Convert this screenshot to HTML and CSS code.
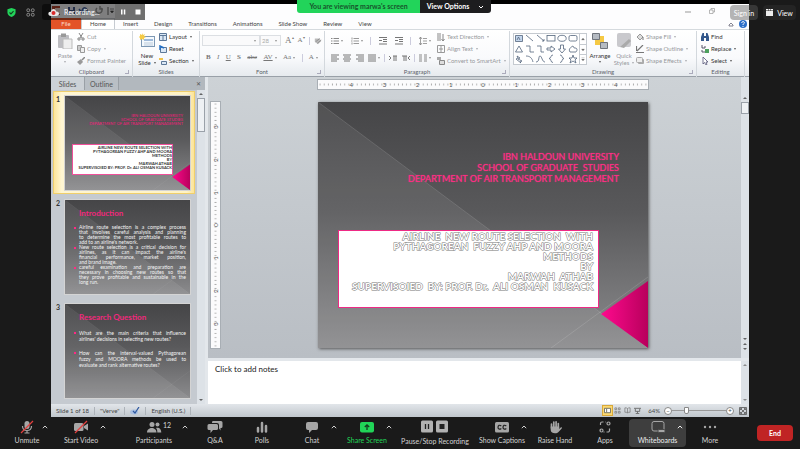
FILE: index.html
```html
<!DOCTYPE html>
<html lang="en">
<head>
<meta charset="utf-8">
<title>Meeting – shared screen</title>
<link rel="stylesheet" href="styles.css">
</head>
<body>
<svg class="defs" aria-hidden="true">
  <defs>
    <linearGradient id="slide-bg" x1="0" y1="0" x2="0" y2="1"><stop offset="0" stop-color="#454547"/><stop offset=".45" stop-color="#59595b"/><stop offset="1" stop-color="#8b8b8d"/></linearGradient>
    <linearGradient id="slide-pink" x1="0" y1="0" x2="1" y2="0"><stop offset="0" stop-color="#ff0a8e"/><stop offset="1" stop-color="#b8005c"/></linearGradient>
    <symbol id="backdrop" viewBox="0 0 330 246" preserveAspectRatio="none">
      <rect width="330" height="246" fill="url(#slide-bg)"/>
      <path d="M0 0 330 246H0z" fill="#fff" fill-opacity=".07"/>
      <path d="M0 0 330 246M233 246 330 175" stroke="#fff" stroke-opacity=".13" fill="none"/>
    </symbol>
    <symbol id="corner" viewBox="0 0 330 246" preserveAspectRatio="none"><path d="M330 179V246L283 212z" fill="url(#slide-pink)"/></symbol>
    <symbol id="caret" viewBox="0 0 6 4"><path d="M.8 3.2 3 1l2.200 2.200" fill="none" stroke="currentColor"/></symbol>
    <pattern id="ticks" width="4.1" height="9" patternUnits="userSpaceOnUse"><path d="M2 3.500V5.500" stroke="#999" stroke-width=".8"/></pattern>
    <pattern id="ticks-v" width="9" height="4.1" patternUnits="userSpaceOnUse"><path d="M3.500 2H5.500" stroke="#999" stroke-width=".8"/></pattern>
  </defs>
</svg>

<main class="stage">
  <div class="gutter gutter-left">
    <svg class="shield" viewBox="0 0 10 10"><path d="M5 0 9.500 1.500V5C9.500 7.500 7.500 9.200 5 10 2.500 9.200.5 7.500.5 5V1.500z" fill="#22d45a"/><path d="M2.800 5 4.400 6.600 7.300 3.500" fill="none" stroke="#143d20" stroke-width="1.200"/></svg>
    <svg class="apps-grid" viewBox="0 0 10 10" fill="none" stroke="#9a9a9a"><rect x="1" y="1" width="3" height="3" rx="1"/><rect x="6" y="1" width="3" height="3" rx="1"/><rect x="1" y="6" width="3" height="3" rx="1"/><rect x="6" y="6" width="3" height="3" rx="1"/></svg>
  </div>

  <section class="app" aria-label="Shared presentation window">
    <header class="titlebar">
      <svg class="quick" viewBox="0 0 66 12"><rect x="1" y="1" width="8" height="9" fill="#b7452c"/><rect x="4" y="3" width="5" height="6" fill="#f3d9cf"/><path d="M17 2h7v7h-7z" fill="#445a8c"/><path d="M19 2h3v3h-3zM18 6h5v3h-5z" fill="#eef"/><path d="M31 6c1-5 6-4 5 2M28 4l3 4 3-3" fill="none" stroke="#4b66a4" stroke-width="1.500"/><path d="M46 3a3 3 0 1 0 4 0M49 1v3h3" fill="none" stroke="#999" stroke-width="1.500"/><path d="M57 2v8" stroke="#666"/><path d="M59 4h4M59.500 6h3L61 8z" fill="#444" stroke="#444" stroke-width=".6"/></svg>
      <div class="window-controls">
        <button aria-label="Minimize"><svg viewBox="0 0 6 6"><path d="M0 4h6" stroke="#999"/></svg></button>
        <button aria-label="Restore"><svg viewBox="0 0 6 6" fill="none" stroke="#999" stroke-width=".7"><path d="M.5 2h3.500v3.500H.5zM2 2V.5h3.500V4H4"/></svg></button>
      </div>
    </header>
    <nav class="tabs">
      <button class="tab file">File</button>
      <button class="tab home">Home</button>
      <button class="tab">Insert</button>
      <button class="tab">Design</button>
      <button class="tab">Transitions</button>
      <button class="tab">Animations</button>
      <button class="tab">Slide Show</button>
      <button class="tab">Review</button>
      <button class="tab">View</button>
      <button class="help" aria-label="Collapse ribbon"><svg viewBox="0 0 8 8"><path d="M2 5 4 3l2 2v1H2z" fill="none" stroke="#667" stroke-width=".8"/></svg></button>
      <button class="help" aria-label="Help"><svg viewBox="0 0 8 8"><circle cx="4" cy="4" r="4" fill="#2c6fc9"/><path d="M2.700 3c0-2 3-1.800 2.600 0C5.200 3.800 4 3.800 4 5M4 6v1" stroke="#fff" fill="none"/></svg></button>
    </nav>

    <div class="ribbon">
      <section class="group">
        <div class="group-body">
          <button class="big muted"><svg viewBox="0 0 16 16"><rect x="1" y="2" width="11" height="13" rx="1" fill="#bdbdc1"/><path d="M4 .5h5V4H4z" fill="#999"/><path d="M6 6h9v10H6z" fill="#eee" stroke="#bbb"/></svg><span>Paste</span><i class="down"></i></button>
          <div class="stack">
            <button class="small muted"><svg viewBox="0 0 8 8"><path d="m2 0 3 5M6 0 3 5" stroke="#888"/><path d="M1 5h2v2H1zM5 5h2v2H5z" fill="none" stroke="#888"/></svg>Cut</button>
            <button class="small muted"><svg viewBox="0 0 8 8"><path d="M.5.5h4v5h-4z" fill="#ccc" stroke="#999"/><path d="M3.500 2.500h4v5h-4z" fill="#eee" stroke="#999"/></svg>Copy<i class="down"></i></button>
            <button class="small muted"><svg viewBox="0 0 8 8"><path d="M0 5 4 2l2 3-3 3z" fill="#999"/><path d="m5 3 3-3" stroke="#888" stroke-width="1.500"/></svg>Format Painter</button>
          </div>
        </div>
        <h2>Clipboard<i class="launch"></i></h2>
      </section>

      <section class="group">
        <div class="group-body">
          <button class="big"><svg viewBox="0 0 16 16"><rect x="2.500" y="3.500" width="13" height="10" fill="#f4f9fd" stroke="#7d98b4"/><path d="M5 6h9v2H5z" fill="#9ebadb"/><path d="M5 10h9M5 12h9" stroke="#bbcbdc"/><path d="m3 0 1 2 2-1-1 2 2 1-2 1 0 2-2-1-2 1V5L0 4l1-1V1l2 1z" fill="#f5cb47"/></svg><span>New<br>Slide<i class="down"></i></span></button>
          <div class="stack">
            <button class="small"><svg viewBox="0 0 8 8"><path d="M.5.5h7v7h-7z" fill="#dce8f5" stroke="#5d7898"/><path d="M1 2.500h6M4 3v4" stroke="#5d7898"/></svg>Layout<i class="down"></i></button>
            <button class="small"><svg viewBox="0 0 8 8"><path d="M1.500 2.500h6v5h-6z" fill="#dce8f5" stroke="#5d7898"/><path d="M1 5V1l4 2" fill="none" stroke="#2470c5" stroke-width="1.500"/></svg>Reset</button>
            <button class="small"><svg viewBox="0 0 8 8"><path d="M0 1h4v2H0z" fill="#f1c349"/><path d="M2.500 4.500h5v3h-5z" fill="#dce8f5" stroke="#5d7898"/></svg>Section<i class="down"></i></button>
          </div>
        </div>
        <h2>Slides</h2>
      </section>

      <section class="group">
        <div class="group-body rows">
          <div class="row">
            <div class="combo"><select class="font-name" aria-label="Font"><option></option></select><i class="down"></i></div>
            <div class="combo size"><select aria-label="Font size"><option>28</option></select><i class="down"></i></div>
            <button class="glyph grow">A<sup>▴</sup></button><button class="glyph">A<sup>▾</sup></button><i class="rule"></i>
            <button class="glyph" aria-label="Clear formatting"><svg viewBox="0 0 10 8"><path d="M1 1h6l2 3-4 4-4-3z" fill="#bbb"/><path d="m2 5 5-4M4 7l5-4" stroke="#888"/></svg></button>
          </div>
          <div class="row spread">
            <button class="glyph"><b>B</b></button><button class="glyph"><em>I</em></button><button class="glyph"><u>U</u></button><button class="glyph"><b>S</b></button><button class="glyph"><s>abc</s></button><button class="glyph"><u>AV</u><i class="down"></i></button><button class="glyph">Aa<i class="down"></i></button><i class="rule"></i><button class="glyph">A<i class="down"></i></button>
          </div>
        </div>
        <h2>Font<i class="launch"></i></h2>
      </section>

      <section class="group">
        <div class="group-body">
          <div class="rows para">
            <div class="row spread">
              <button class="glyph" aria-label="Bullets"><svg viewBox="0 0 8 8"><path d="M0 1.500h1.500m1 0H8M0 4h1.500m1 0H8M0 6.500h1.500m1 0H8" stroke="#888"/></svg><i class="down"></i></button>
              <button class="glyph" aria-label="Numbering"><svg viewBox="0 0 8 8"><path d="M1 .5v2M0 4h1.500m1-2.500H8M2.500 4H8M1 5.500v2m1.500-1H8" stroke="#999"/></svg><i class="down"></i></button><i class="rule"></i>
              <button class="glyph" aria-label="Decrease indent"><svg viewBox="0 0 8 8"><path d="M0 .5h8M4 2.500h4M4 4.500h4M0 7h8M3 3.500H0" stroke="#777"/></svg></button>
              <button class="glyph" aria-label="Increase indent"><svg viewBox="0 0 8 8"><path d="M0 .5h8M4 2.500h4M4 4.500h4M0 7h8M3 3.500H0" stroke="#777"/></svg></button><i class="rule"></i>
              <button class="glyph" aria-label="Line spacing"><svg viewBox="0 0 8 8"><path d="M1.500 0v8M0 2l1.500-2L3 2M0 6l1.500 2L3 6M4 1.500h4M4 4h4M4 6.500h4" fill="none" stroke="#888" stroke-width=".8"/></svg><i class="down"></i></button>
            </div>
            <div class="row spread">
              <button class="glyph" aria-label="Align left"><svg viewBox="0 0 8 8"><path d="M0 1h8M0 3h6M0 5h8M0 7h6" stroke="#777"/></svg></button>
              <button class="glyph" aria-label="Center"><svg viewBox="0 0 8 8"><path d="M0 1h8M1 3h6M0 5h8M1 7h6" stroke="#777"/></svg></button>
              <button class="glyph" aria-label="Align right"><svg viewBox="0 0 8 8"><path d="M0 1h8M2 3h6M0 5h8M2 7h6" stroke="#777"/></svg></button>
              <button class="glyph" aria-label="Justify"><svg viewBox="0 0 8 8"><path d="M0 1h8M0 3h8M0 5h8M0 7h8" stroke="#777"/></svg><i class="down"></i></button><i class="rule"></i>
              <button class="glyph" aria-label="Left to right"><svg viewBox="0 0 8 8"><path d="m0 2 2 2-2 2M5 2v5M7 2v5M4 2h4" fill="none" stroke="#777"/></svg></button>
              <button class="glyph" aria-label="Right to left"><svg viewBox="0 0 8 8"><path d="M2 2v5M4 2v5M0 2h5m3 0L6 4l2 2" fill="none" stroke="#777"/></svg></button><i class="rule"></i>
              <button class="glyph" aria-label="Columns"><svg viewBox="0 0 8 8"><path d="M0 1h3M0 3h3M0 5h3M0 7h3M5 1h3M5 3h3M5 5h3M5 7h3" stroke="#888"/></svg><i class="down"></i></button>
            </div>
          </div>
          <div class="stack">
            <button class="small muted"><svg viewBox="0 0 8 8"><path d="M1 0v8M3 0v8M6 1v7M4.500 6 6 8l1.500-2" fill="none" stroke="#888"/></svg>Text Direction<i class="down"></i></button>
            <button class="small muted"><svg viewBox="0 0 8 8"><path d="M.5.5h7v7h-7zM2 4h4M4 1v6" fill="none" stroke="#999"/></svg>Align Text<i class="down"></i></button>
            <button class="small muted"><svg viewBox="0 0 8 8"><path d="M0 0h4v3H0z" fill="#aaa"/><path d="M2.500 3.500h5v4h-5z" fill="#ddd" stroke="#888"/></svg>Convert to SmartArt<i class="down"></i></button>
          </div>
        </div>
        <h2>Paragraph<i class="launch"></i></h2>
      </section>

      <section class="group">
        <div class="group-body">
          <svg class="shapes" viewBox="0 0 74 32" role="img" aria-label="Shape gallery">
            <rect x=".5" y=".5" width="73" height="31" fill="#fff" stroke="#c5cad0"/>
            <g fill="none" stroke="#53657c" stroke-width=".8">
              <path d="M2.500 2.500h7v6h-7z" fill="#c4d6ec"/><path d="m4 7 1.500-3L7 7M13 2l7 6M24 2l7 6M31 6v2h-2"/><rect x="34" y="2.500" width="8" height="5.500"/><ellipse cx="49" cy="5.300" rx="4.200" ry="3"/><rect x="56" y="2.500" width="8" height="5.500" rx="1.500"/>
              <path d="m6 13 3.500 6h-7zM13 13h4v6h4M24 13h4v6h3M34 15h4v-2l4 3-4 3v-2h-4zM47.500 12h3v4h2L49 20l-3.500-4h2zM57 19c-2-3 1-5 3-6 1 1 0 2 2 2 3 0 2 3 1 4z"/>
              <path d="m4 23 3 2-2 1 4 2-2 1 1 1-5-4 2-1zM13 23c4 0 6 2 7 6M23 29c4 0 2-6 4-6s2 6 5 6M40 22c-3 0-1 3-4 3.500 3 .5 1 4 4 4M47 22c3 0 1 3 4 3.500-3 .5-1 4-4 4M60 22l1 3h3l-2 2 1 3-3-2-3 2 1-3-2-2h3z"/>
            </g>
            <path d="M66.500 1v30M67 11.500h6M67 21.500h6" stroke="#c5cad0"/><path d="M68.500 7h3L70 5zM68.500 16h3L70 18zM68.500 26h3L70 28zM68.500 24.500h3" fill="#666" stroke="#888" stroke-width=".3"/>
          </svg>
          <button class="big"><svg viewBox="0 0 16 16"><path d="M3 3h9v9H3z" fill="#f5c944"/><path d="M.5.5h7v6h-7zM8.500 9.500h7v6h-7z" fill="#b5bbc2" stroke="#6f757c"/></svg><span>Arrange</span><i class="down"></i></button>
          <button class="big muted"><svg viewBox="0 0 16 16"><rect x="1" y="0" width="14" height="14" rx="2" fill="#c9c9cd"/><path d="m4 14 9-8 2 2-7 7z" fill="#aaa"/></svg><span>Quick<br>Styles<i class="down"></i></span></button>
          <div class="stack">
            <button class="small muted"><svg viewBox="0 0 8 8"><path d="m1 4 3-3 3 3-3 3z" fill="#ddd" stroke="#999"/><path d="M7 4v3" stroke="#777"/></svg>Shape Fill<i class="down"></i></button>
            <button class="small muted"><svg viewBox="0 0 8 8"><path d="M.5 1v5M0 7.500h8M1 6l6-6" fill="none" stroke="#777" stroke-width="1.200"/></svg>Shape Outline<i class="down"></i></button>
            <button class="small muted"><svg viewBox="0 0 8 8"><rect x="2" y="2" width="6" height="5" rx="1" fill="#aaa"/><rect x=".5" y=".5" width="6" height="5" rx="1" fill="#eee" stroke="#aaa"/></svg>Shape Effects<i class="down"></i></button>
          </div>
        </div>
        <h2>Drawing<i class="launch"></i></h2>
      </section>

      <section class="group">
        <div class="group-body editing">
          <div class="stack">
            <button class="small"><svg viewBox="0 0 8 8"><path d="M0 4 1.500 0h1.500v3h2V0h1.500L8 4v4H5V5H3v3H0z" fill="#33588c"/></svg>Find</button>
            <button class="small"><svg viewBox="0 0 8 8"><path d="M1 0v3h3V1M1 5v2h3" fill="none" stroke="#556"/><path d="M4 4h4v4H4z" fill="#4da05e"/></svg>Replace<i class="down"></i></button>
            <button class="small"><svg viewBox="0 0 8 8"><path d="M2 0v7l1.500-1.500L5 8l1-.5L5 5h2z" fill="#fff" stroke="#557" stroke-width=".8"/></svg>Select<i class="down"></i></button>
          </div>
        </div>
        <h2>Editing</h2>
      </section>
    </div>

    <div class="workspace">
      <aside class="pane">
        <div class="pane-tabs"><button class="pane-tab active">Slides</button><button class="pane-tab">Outline</button><button class="pane-close" aria-label="Close pane">✕</button></div>
        <ol class="thumbs">
          <li class="thumb selected"><span class="num">1</span>
            <div class="mini cover"><svg class="backdrop"><use href="#backdrop"/></svg>
              <p class="mini-school">IBN HALDOUN UNIVERSITY<br>SCHOOL OF GRADUATE STUDIES<br>DEPARTMENT OF AIR TRANSPORT MANAGEMENT</p>
              <p class="mini-box">AIRLINE NEW ROUTE SELECTION WITH<br>PYTHAGOREAN FUZZY AHP AND MOORA<br>METHODS<br>BY<br>MARWAH ATHAB<br>SUPERVISOIED BY: PROF. Dr. ALI OSMAN KUSACK</p>
              <svg class="backdrop"><use href="#corner"/></svg>
            </div></li>
          <li class="thumb"><span class="num">2</span>
            <div class="mini"><svg class="backdrop"><use href="#backdrop"/></svg>
              <h3>Introduction</h3>
              <ul>
                <li>Airline route selection is a complex process<br>that involves careful analysis and planning<br>to determine the most profitable routes to<span>add to an airline's network.</span></li>
                <li>New route selection is a critical decision for<br>airlines, as it can impact the airline's<br>financial performance, market position,<span>and brand image.</span></li>
                <li>careful examination and preparation are<br>necessary in choosing new routes so that<br>they prove profitable and sustainable in the<span>long run.</span></li>
              </ul>
            </div></li>
          <li class="thumb"><span class="num">3</span>
            <div class="mini airy"><svg class="backdrop"><use href="#backdrop"/></svg>
              <h3>Research Question</h3>
              <ul>
                <li>What are the main criteria that influence<span>airlines' decisions in selecting new routes?</span></li>
                <li>How can the interval-valued Pythagorean<br>fuzzy and MOORA methods be used to<span>evaluate and rank alternative routes?</span></li>
              </ul>
            </div></li>
        </ol>
        <div class="scroll"><i class="up"></i><i class="handle"></i><i class="down"></i></div>
      </aside>

      <div class="editor">
        <div class="canvas">
          <svg class="ruler-h" viewBox="0 0 328 9" preserveAspectRatio="none"><rect width="328" height="9" fill="#fbfbfc"/><rect width="328" height="9" fill="url(#ticks)"/>
            <g class="ruler-text"><text x="33" y="7">4</text><text x="66" y="7">3</text><text x="99" y="7">2</text><text x="132" y="7">1</text><text x="164" y="7">0</text><text x="197" y="7">1</text><text x="230" y="7">2</text><text x="263" y="7">3</text><text x="296" y="7">4</text></g></svg>
          <svg class="ruler-v" viewBox="0 0 9 246" preserveAspectRatio="none"><rect width="9" height="246" fill="#fbfbfc"/><rect width="9" height="246" fill="url(#ticks-v)"/>
            <g class="ruler-text"><text transform="translate(7 25) rotate(-90)">3</text><text transform="translate(7 58) rotate(-90)">2</text><text transform="translate(7 91) rotate(-90)">1</text><text transform="translate(7 123) rotate(-90)">0</text><text transform="translate(7 156) rotate(-90)">1</text><text transform="translate(7 189) rotate(-90)">2</text><text transform="translate(7 222) rotate(-90)">3</text></g></svg>
          <article class="slide"><svg class="backdrop"><use href="#backdrop"/></svg>
            <p class="school">IBN HALDOUN UNIVERSITY<br>SCHOOL OF GRADUATE &nbsp;STUDIES<br>DEPARTMENT OF AIR TRANSPORT MANAGEMENT</p>
            <h1>AIRLINE &nbsp;NEW ROUTE SELECTION &nbsp;WITH<br>PYTHAGOREAN &nbsp;FUZZY AHP AND MOORA<br>METHODS<br>BY<br>MARWAH &nbsp;ATHAB<br>SUPERVISOIED &nbsp;BY: PROF. Dr. &nbsp;ALI OSMAN &nbsp;KUSACK</h1>
            <svg class="backdrop"><use href="#corner"/></svg>
          </article>
        </div>
        <div class="scroll"><i class="up"></i><i class="handle"></i><i class="down"></i><i class="up dark"></i><i class="down dark"></i></div>
        <textarea class="notes" aria-label="Notes" placeholder="Click to add notes"></textarea>
        <div class="scroll notes-scroll"><i class="up"></i><i class="down"></i></div>
      </div>
    </div>

    <footer class="status">
      <span>Slide 1 of 18</span><span>"Verve"</span>
      <span><svg viewBox="0 0 10 8"><ellipse cx="4" cy="5" rx="4" ry="2.500" fill="#a9bfe0"/><path d="m3 4 2 2 4-6" fill="none" stroke="#2d58a0" stroke-width="1.200"/></svg></span>
      <span>English (U.S.)</span>
      <div class="views">
        <button class="on" aria-label="Normal"><svg viewBox="0 0 8 8"><path d="M.5 1.500h7v5h-7zM3 2v4" fill="#fff" stroke="#665"/></svg></button>
        <button aria-label="Slide sorter"><svg viewBox="0 0 8 8" fill="none" stroke="#777" stroke-width=".8"><path d="M1 1h2v2H1zM5 1h2v2H5zM1 5h2v2H1zM5 5h2v2H5z"/></svg></button>
        <button aria-label="Reading view"><svg viewBox="0 0 8 8" fill="none" stroke="#777" stroke-width=".8"><path d="M1 1h2l1 1 1-1h2v5H5L4 7 3 6H1zM4 2v5"/></svg></button>
        <button aria-label="Slide show"><svg viewBox="0 0 8 8" fill="none" stroke="#666"><path d="M0 1.500h8M1.500 2v3h5V2M4 5v2M2 7.500h4"/></svg></button>
      </div>
      <button class="pct">64%</button>
      <button class="round" aria-label="Zoom out">−</button>
      <input type="range" class="zoom" min="0" max="100" value="25" aria-label="Zoom">
      <button class="round" aria-label="Zoom in">+</button>
      <button class="fit" aria-label="Fit to window"><svg viewBox="0 0 8 8" fill="none" stroke="#555" stroke-width=".8"><path d="M.5.5h7v7h-7zM1.500 3V1.500H3M5 1.500h1.500V3M6.500 5v1.500H5M3 6.500H1.500V5M2 2l4 4M6 2 2 6"/></svg></button>
    </footer>
  </section>

  <div class="gutter"></div>

  <div class="recording"><svg viewBox="0 0 11 9"><path d="M3 8C-1 8 0 3 3 4 3 0 8 0 8 3.500 12 3 12 8 8 8z" fill="#e8e8e8"/><circle cx="5.500" cy="5" r="2" fill="#d92b2b"/></svg><span>Recording...</span>
    <div class="rec-controls"><button aria-label="Pause recording"><svg viewBox="0 0 6 6" fill="#fff"><path d="M1 .5h1.500v5H1zM3.800.5h1.500v5H3.800z"/></svg></button><button aria-label="Stop recording"><svg viewBox="0 0 6 6"><path d="M.5.5h5v5h-5z" fill="#fff"/></svg></button></div></div>
  <div class="banner"><span>You are viewing marwa's screen</span><button>View Options<svg viewBox="0 0 6 4"><path d="m1 1 2 2 2-2" fill="none" stroke="currentColor"/></svg></button></div>
  <div class="top-right"><button class="signin">Sign in</button><button class="view"><svg viewBox="0 0 7 7" fill="#eee"><path d="M0 0h2v1.500H0zM2.500 0h2v1.500h-2zM5 0h2v1.500H5zM0 2h7v5H0z"/></svg>View</button></div>
</main>

<nav class="toolbar" aria-label="Meeting controls">
  <div class="tool"><button><svg viewBox="0 0 16 14"><rect x="5.500" y="1" width="5" height="8" rx="2.500" fill="#a6a6a6"/><path d="M3.500 6c0 6 9 6 9 0M8 10.500V13M5.500 13h5" fill="none" stroke="#a6a6a6" stroke-width="1.200"/><path d="M2 13 14 1" stroke="#e3403f" stroke-width="1.300"/></svg>Unmute</button><button class="more near" aria-label="Audio options"><svg><use href="#caret"/></svg></button></div>
  <div class="tool"><button><svg viewBox="0 0 16 14"><rect x="1" y="3" width="9.500" height="8" rx="1.500" fill="#a6a6a6"/><path d="m11 6 4-2.500v7L11 8z" fill="#a6a6a6"/><path d="M2 13 14 1" stroke="#e3403f" stroke-width="1.300"/></svg>Start Video</button><button class="more" aria-label="Video options"><svg><use href="#caret"/></svg></button></div>
  <div class="tool"><button><svg viewBox="0 0 16 14" fill="#a6a6a6"><circle cx="6" cy="4.500" r="2.500"/><circle cx="11.500" cy="4.500" r="2"/><path d="M1 12.500C1 6.500 10.500 6.500 10.500 12.500zM11.300 12.500h4C15.300 8 12 7 10 8c1.200 1.200 1.300 2.500 1.300 4.500z"/></svg>Participants</button><span class="count">12</span><button class="more far" aria-label="Participant options"><svg><use href="#caret"/></svg></button></div>
  <div class="tool"><button><svg viewBox="0 0 16 14" fill="#a6a6a6"><path d="M6 1h8a1.500 1.500 0 0 1 1.500 1.500v4A1.500 1.500 0 0 1 14 8h-.5v2.500L12 8.500V5A2 2 0 0 0 10 3H5c0-1 0-2 1-2z"/><path d="M2 4h7.500A1.500 1.500 0 0 1 11 5.500v3A1.500 1.500 0 0 1 9.500 10H6l-2.500 3v-3H2A1.500 1.500 0 0 1 .5 8.500v-3A1.500 1.500 0 0 1 2 4z"/></svg>Q&amp;A</button></div>
  <div class="tool"><button><svg viewBox="0 0 16 14" stroke="#a6a6a6" stroke-width="2.500" stroke-linecap="round"><path d="M4 8v3.500M8 3v8.500M12 6v5.500"/></svg>Polls</button></div>
  <div class="tool"><button><svg viewBox="0 0 16 14"><path d="M4 2h8a2 2 0 0 1 2 2v4a2 2 0 0 1-2 2H8l-3 3v-3H4a2 2 0 0 1-2-2V4a2 2 0 0 1 2-2z" fill="#a6a6a6"/></svg>Chat</button><button class="more" aria-label="Chat options"><svg><use href="#caret"/></svg></button></div>
  <div class="tool share"><button><svg viewBox="0 0 16 14"><rect x="1" y="2" width="14" height="10.500" rx="2" fill="#21d558"/><path d="M8 10V5M5.800 7 8 4.800 10.200 7" fill="none" stroke="#143d20" stroke-width="1.300"/></svg>Share Screen</button><button class="more" aria-label="Share options"><svg><use href="#caret"/></svg></button></div>
  <div class="tool record"><button><svg viewBox="0 0 28 12"><rect width="12" height="12" rx="1.500" fill="#b2b2b2"/><rect x="15" width="12" height="12" rx="1.500" fill="#b2b2b2"/><path d="M4.500 3.500v5M7.500 3.500v5" stroke="#222" stroke-width="1.300"/><path d="M18.500 3.500h5v5h-5z" fill="#222"/></svg>Pause/Stop Recording</button></div>
  <div class="tool"><button><svg viewBox="0 0 16 14"><rect x="1" y="2" width="14" height="10.500" rx="1.500" fill="#a6a6a6"/><path d="M7.300 6C5.500 4.500 4 5.500 4 7.200s1.500 2.800 3.300 1.300M12.300 6C10.500 4.500 9 5.500 9 7.200s1.500 2.800 3.300 1.300" fill="none" stroke="#222" stroke-width="1.200"/></svg>Show Captions</button><button class="more" aria-label="Caption options"><svg><use href="#caret"/></svg></button></div>
  <div class="tool"><button><svg viewBox="0 0 16 14"><path d="M4.500 8V4M6.800 7V2M9.100 7V1.800M11.300 8V3.500" stroke="#a6a6a6" stroke-width="1.700" stroke-linecap="round"/><path d="M3.700 6.500h8.500V9l1.500-1.500c1-.5 1.500.2 1 1L11.500 12c-1.500 2-7.800 2-7.800-2z" fill="#a6a6a6"/></svg>Raise Hand</button></div>
  <div class="tool"><button><svg viewBox="0 0 16 14" fill="none" stroke="#a6a6a6" stroke-width="1.200"><path d="M6.500 2H5a1.500 1.500 0 0 0-1.500 1.500V5M3.500 9v1.500M9.500 12H11a1.500 1.500 0 0 0 1.500-1.500V8.500"/><circle cx="11.500" cy="3.500" r="1.500"/><circle cx="4.500" cy="10.500" r="1.500"/><path d="M9 2h-.5M7.500 12h-1"/></svg>Apps</button></div>
  <div class="tool boards"><button><svg viewBox="0 0 16 14"><rect x="2" y="1.500" width="12" height="9.500" rx="2" fill="none" stroke="#a6a6a6"/><rect x="8" y="9.500" width="7" height="3" rx="1" fill="#a6a6a6" stroke="#484848"/></svg>Whiteboards</button><button class="more" aria-label="Whiteboard options"><svg><use href="#caret"/></svg></button></div>
  <div class="tool"><button><svg viewBox="0 0 16 14" fill="#a6a6a6"><circle cx="3" cy="7" r="1.200"/><circle cx="8" cy="7" r="1.200"/><circle cx="13" cy="7" r="1.200"/></svg>More</button></div>
  <button class="end">End</button>
</nav>
</body>
</html>
```
FILE: styles.css
```css
* { box-sizing: border-box; }
body {
  margin: 0;
  min-height: 100vh;
  display: grid;
  grid-template-rows: 1fr auto;
  background: #1a1a1a;
  color: #333;
  font-family: Lato, "Open Sans", sans-serif;
  font-size: 6px;
  line-height: 8px;
}
button, select, input, textarea { font: inherit; color: inherit; }
button { padding: 0; border: 0; background: none; white-space: nowrap; }
p, h1, h2, h3, ol, ul { margin: 0; padding: 0; font-weight: normal; list-style: none; }
svg { display: block; flex: none; }
.defs { position: absolute; width: 0; height: 0; }

.stage { position: relative; display: grid; grid-template-columns: 51px 1fr 51px; }
.gutter-left { display: flex; gap: 10px; padding: 8px 7px; }
.shield, .apps-grid { width: 9px; height: 9px; }

/* triangles used by menus and scroll bars */
.down, .up { display: inline-block; width: 0; height: 0; border: 1px solid transparent; border-top: 2px solid currentColor; border-bottom: 0; margin-left: 3px; vertical-align: middle; opacity: .8; }
.up { border-top: 0; border-bottom: 2px solid currentColor; }

/* shared window */
.app { display: grid; grid-template-rows: auto auto auto 1fr auto; border-top: 4px solid #000; background: #fdfdfe; min-width: 0; }
.titlebar { height: 14px; display: flex; justify-content: space-between; align-items: center; }
.quick { width: 66px; height: 12px; }
.window-controls { display: flex; gap: 18px; padding-right: 34px; }
.window-controls svg { width: 6px; height: 6px; }
.tabs { display: flex; align-items: stretch; height: 12px; border-bottom: 1px solid #d5dade; color: #444; }
.tab { padding: 0 8px; }
.file { width: 30px; background: #e35328; color: #fbd9cb; }
.home { width: 34px; border: 1px solid #c6cbd1; border-bottom: 0; background: #fff; }
.help { margin-left: auto; }
.help + .help { margin: 0 2px 0 4px; }
.help svg { width: 8px; height: 8px; }

.ribbon { display: grid; grid-template-columns: 82fr 67fr 125fr 185fr 187fr 48fr; padding: 1px 4px 0 0; height: 47px; background: linear-gradient(#fff, #f9fafc 60%, #e6eaee); border-bottom: 1px solid #99a0a8; }
.group { min-width: 0; display: grid; grid-template-rows: 1fr 10px; border-right: 1px solid #d3d8dd; }
.group h2 { position: relative; text-align: center; font-size: 6px; line-height: 9px; color: #5c626a; }
.launch { position: absolute; right: 3px; bottom: 3px; width: 4px; height: 4px; border: 1px solid #aab; border-left: 0; border-top: 0; }
.group-body { display: flex; min-width: 0; padding: 0 2px; }
.editing { padding-left: 4px; }
.big { width: 24px; display: flex; flex-direction: column; align-items: center; line-height: 7px; padding-top: 2px; flex: none; }
.big svg { width: 16px; height: 16px; margin-bottom: 3px; }
.big > .down { margin: 2px 0 0; }
.stack { display: grid; grid-template-rows: repeat(3, 12px); }
.small { display: flex; align-items: center; gap: 2px; text-align: left; }
.small svg { width: 8px; height: 8px; }
.small .down { margin-left: 1px; }
.muted { color: #96989c; }
.rows { display: flex; flex-direction: column; gap: 6px; padding-top: 4px; }
.row { display: flex; align-items: center; height: 11px; color: #777; }
.spread { justify-content: space-between; padding: 0 4px; }
.para { width: 110px; padding-right: 2px; }
.combo { position: relative; width: 58px; height: 11px; border: 1px solid #dcdfe3; background: #fafafb; }
.combo select { display: block; width: 100%; height: 9px; border: 0; padding: 0 1px; background: none; appearance: none; color: #aaa; }
.combo.size { width: 21px; }
.combo .down { position: absolute; right: 3px; top: 4px; }
.glyph { display: inline-flex; align-items: center; font: 7px/9px "Liberation Serif", serif; }
.glyph svg { width: 8px; height: 8px; }
.glyph .down { margin-left: 2px; }
.row .combo ~ .glyph { margin-left: 4px; }
.glyph.grow { font-size: 9px; }
.glyph sup { font-size: 4px; line-height: 4px; align-self: flex-start; }
.rule { width: 1px; height: 8px; background: #ccd; }
.row .combo ~ .rule { margin-left: 4px; }
.shapes { width: 74px; height: 32px; margin: 2px 1px 0; }

/* workspace */
.workspace { display: grid; grid-template-columns: 154px 1fr; gap: 3px; background: #e3e7eb; min-height: 0; }
.pane { display: grid; grid-template-columns: 1fr 8px; grid-template-rows: 13px 1fr; background: #c5cad0; overflow: hidden; }
.pane-tabs { grid-column: 1 / 3; display: flex; align-items: stretch; background: #b2b8be; color: #555; }
.pane-tab { width: 34px; border-right: 1px solid #9aa0a6; font-size: 7px; background: #b9bfc5; }
.pane-tab.active { background: #ccd1d6; }
.pane-close { margin-left: auto; padding-right: 4px; }
.thumbs { padding: 1px 2px 0; }
.thumb { display: grid; grid-template-columns: 8px 1fr; gap: 2px; padding: 4px 4px 3px 1px; margin-bottom: 1px; height: 103px; }
.thumb.selected { background: linear-gradient(90deg, #fbe293, #fff6d2 6%, #fff3c4 94%, #fbe293); box-shadow: inset 0 0 0 1px #f0cf6b; }
.num { text-align: center; font-weight: bold; font-size: 7px; }
.mini { position: relative; height: 96px; border: 1px solid #d4d4d4; overflow: hidden; }
.backdrop { position: absolute; inset: 0; width: 100%; height: 100%; }
.mini > :not(.backdrop) { position: relative; }
.mini h3 { padding: 8px 0 0 14px; color: #f0287c; font-size: 8px; line-height: 10px; font-weight: bold; }
.mini ul { padding: 7px 4px 0 14px; color: #f4f4f4; font-size: 5px; line-height: 5px; text-align: justify; text-align-last: justify; white-space: nowrap; }
.mini li { position: relative; }
.mini li span { display: block; text-align-last: left; }
.mini li::before { content: ""; position: absolute; left: -5px; top: 2px; width: 2px; height: 2px; background: #ff2a86; }
.airy ul { padding-top: 8px; line-height: 6px; }
.airy li + li { margin-top: 8px; }
.mini-school { padding: 18px 7px 0 0; color: #f01c7a; font-size: 4px; line-height: 4px; text-align: right; white-space: nowrap; }
.mini-box { margin: 18px 17px 0 7px; height: 31px; padding-top: 1px; border: 1px solid #f0509a; background: #fff; color: #333; font-weight: bold; font-size: 4px; line-height: 4px; text-align: right; white-space: nowrap; }

.scroll { display: flex; flex-direction: column; align-items: center; gap: 3px; padding: 3px 0; background: #dde2e7; color: #444; }
.scroll i { margin: 0; }
.scroll .down, .scroll .up { border-left-width: 2px; border-right-width: 2px; }
.handle { width: 8px; height: 34px; border: 1px solid #9aa1a9; background: #eef1f4; }
.scroll > .handle + .down { margin-top: auto; }

.editor { display: grid; grid-template-columns: 1fr 8px; grid-template-rows: 1fr 43px; row-gap: 3px; min-width: 0; }
.canvas { display: grid; grid-template-columns: 9px 1fr; grid-template-rows: 9px 1fr; column-gap: 98px; row-gap: 13px; padding: 3px 93px 9px 3px; background: linear-gradient(#cdd2d6, #b9bec4); }
.ruler-h { grid-column: 2; width: 100%; height: 9px; outline: 1px solid #a8aeb4; }
.ruler-v { grid-row: 2; width: 9px; height: 246px; outline: 1px solid #a8aeb4; }
.ruler-text { font-size: 6px; fill: #555; text-anchor: middle; }
.slide { position: relative; aspect-ratio: 330 / 246; align-self: start; box-shadow: 1px 1px 3px #555; text-align: right; white-space: nowrap; }
.slide > :not(.backdrop) { position: relative; }
.school { padding: 49px 29px 0 0; color: #ff2f85; font-size: 9px; line-height: 11px; text-shadow: 0 0 1px #f0327f; }
.slide h1 { margin: 46px 49px 0 20px; height: 78px; padding: 0 5px; border: 1px solid #ee2a85; background: #fff; color: #fff; font-size: 10px; line-height: 10px; font-weight: bold; -webkit-text-stroke: 1px #777; paint-order: stroke fill; }
.editor > .canvas + .scroll .handle { height: 12px; }
.editor > .canvas + .scroll { padding: 20px 0 8px; }
.notes { width: 100%; height: 43px; padding: 3px 7px; border: 0; resize: none; background: #fff; font-size: 8px; line-height: 11px; }
.notes::placeholder { color: #222; opacity: 1; }
.notes-scroll { justify-content: space-between; color: #777; }

.status { display: flex; align-items: center; height: 13px; padding-right: 2px; background: linear-gradient(#e2e6ea, #c0c6cc); color: #444; }
.status > span { padding: 0 5px; border-right: 1px solid #adb3b9; }
.status > span svg { width: 10px; height: 8px; }
.views { display: flex; gap: 1px; margin-left: auto; }
.views button { width: 9px; height: 9px; display: grid; place-items: center; }
.views svg { width: 7px; height: 7px; }
.views .on { background: #fbd872; outline: 1px solid #d9a93a; }
.pct { padding: 0 4px 0 6px; }
.round { width: 8px; height: 8px; border: 1px solid #888; border-radius: 50%; line-height: 5px; background: #fff; }
.zoom { width: 54px; height: 8px; margin: 0; appearance: none; background: linear-gradient(#999, #999) center / 100% 1px no-repeat; }
.zoom::-webkit-slider-thumb { appearance: none; width: 5px; height: 7px; border: 1px solid #888; background: #fff; border-radius: 0 0 2px 2px; }
.fit { margin-left: 5px; }
.fit svg { width: 8px; height: 8px; }

/* meeting overlays */
.recording { position: absolute; left: 42px; top: 4px; display: flex; align-items: center; height: 16px; padding-left: 6px; background: rgba(0, 0, 0, .5); color: #fff; border-radius: 3px; font-size: 7px; }
.recording > svg { width: 11px; height: 9px; margin-right: 5px; }
.recording > span { width: 51px; }
.rec-controls { display: flex; width: 30px; height: 16px; background: #6f6f6f; justify-content: space-around; align-items: center; }
.rec-controls svg { width: 6px; height: 6px; }
.banner { position: absolute; left: 297px; top: 0; display: flex; height: 13px; border-radius: 0 0 3px 3px; overflow: hidden; font-size: 7px; line-height: 13px; font-weight: bold; }
.banner span { width: 123px; text-align: center; background: #22d45a; color: #17552c; }
.banner button { width: 71px; background: #1d1d1f; color: #fff; display: flex; align-items: center; justify-content: center; gap: 9px; }
.banner svg { width: 6px; height: 4px; }
.top-right { position: absolute; right: 4px; top: 5px; display: flex; gap: 5px; color: #fff; font-size: 7px; }
.signin { width: 28px; height: 15px; border-radius: 4px; background: rgba(90, 90, 90, .45); }
.view { width: 33px; height: 15px; border-radius: 4px; background: #242424; display: flex; align-items: center; justify-content: center; gap: 4px; }
.view svg { width: 7px; height: 7px; }

/* meeting toolbar */
.toolbar { display: grid; grid-template-columns: 36fr 72fr 74fr 48fr 46fr 54fr 56fr 80fr 54fr 52fr 48fr 57fr 48fr 66fr; padding: 2px 0 2px 9px; color: #d2d2d2; font-size: 7px; line-height: 9px; }
.tool { position: relative; min-width: 0; display: grid; height: 28px; }
.tool > button:first-child { display: flex; flex-direction: column; align-items: center; gap: 2px; padding-top: 1px; min-width: 0; }
.tool > button > svg { width: 16px; height: 14px; }
.tool.record > button > svg { width: 28px; height: 13px; }
.tool.record > button:first-child { gap: 4px; }
.more { position: absolute; left: calc(50% + 19px); top: 6px; }
.tool > .more svg { width: 6px; height: 4px; }
.more.near { left: calc(50% + 15px); }
.more.far { left: calc(50% + 28px); }
.count { position: absolute; left: calc(50% + 9px); top: 2px; }
.share > button:first-child { color: #21d558; }
.boards { background: #3e3e3e; border-radius: 4px; color: #eee; }
.end { width: 36px; height: 16px; align-self: center; justify-self: center; margin-left: 16px; border-radius: 4px; background: #c02424; color: #fff; font-weight: bold; }
```
